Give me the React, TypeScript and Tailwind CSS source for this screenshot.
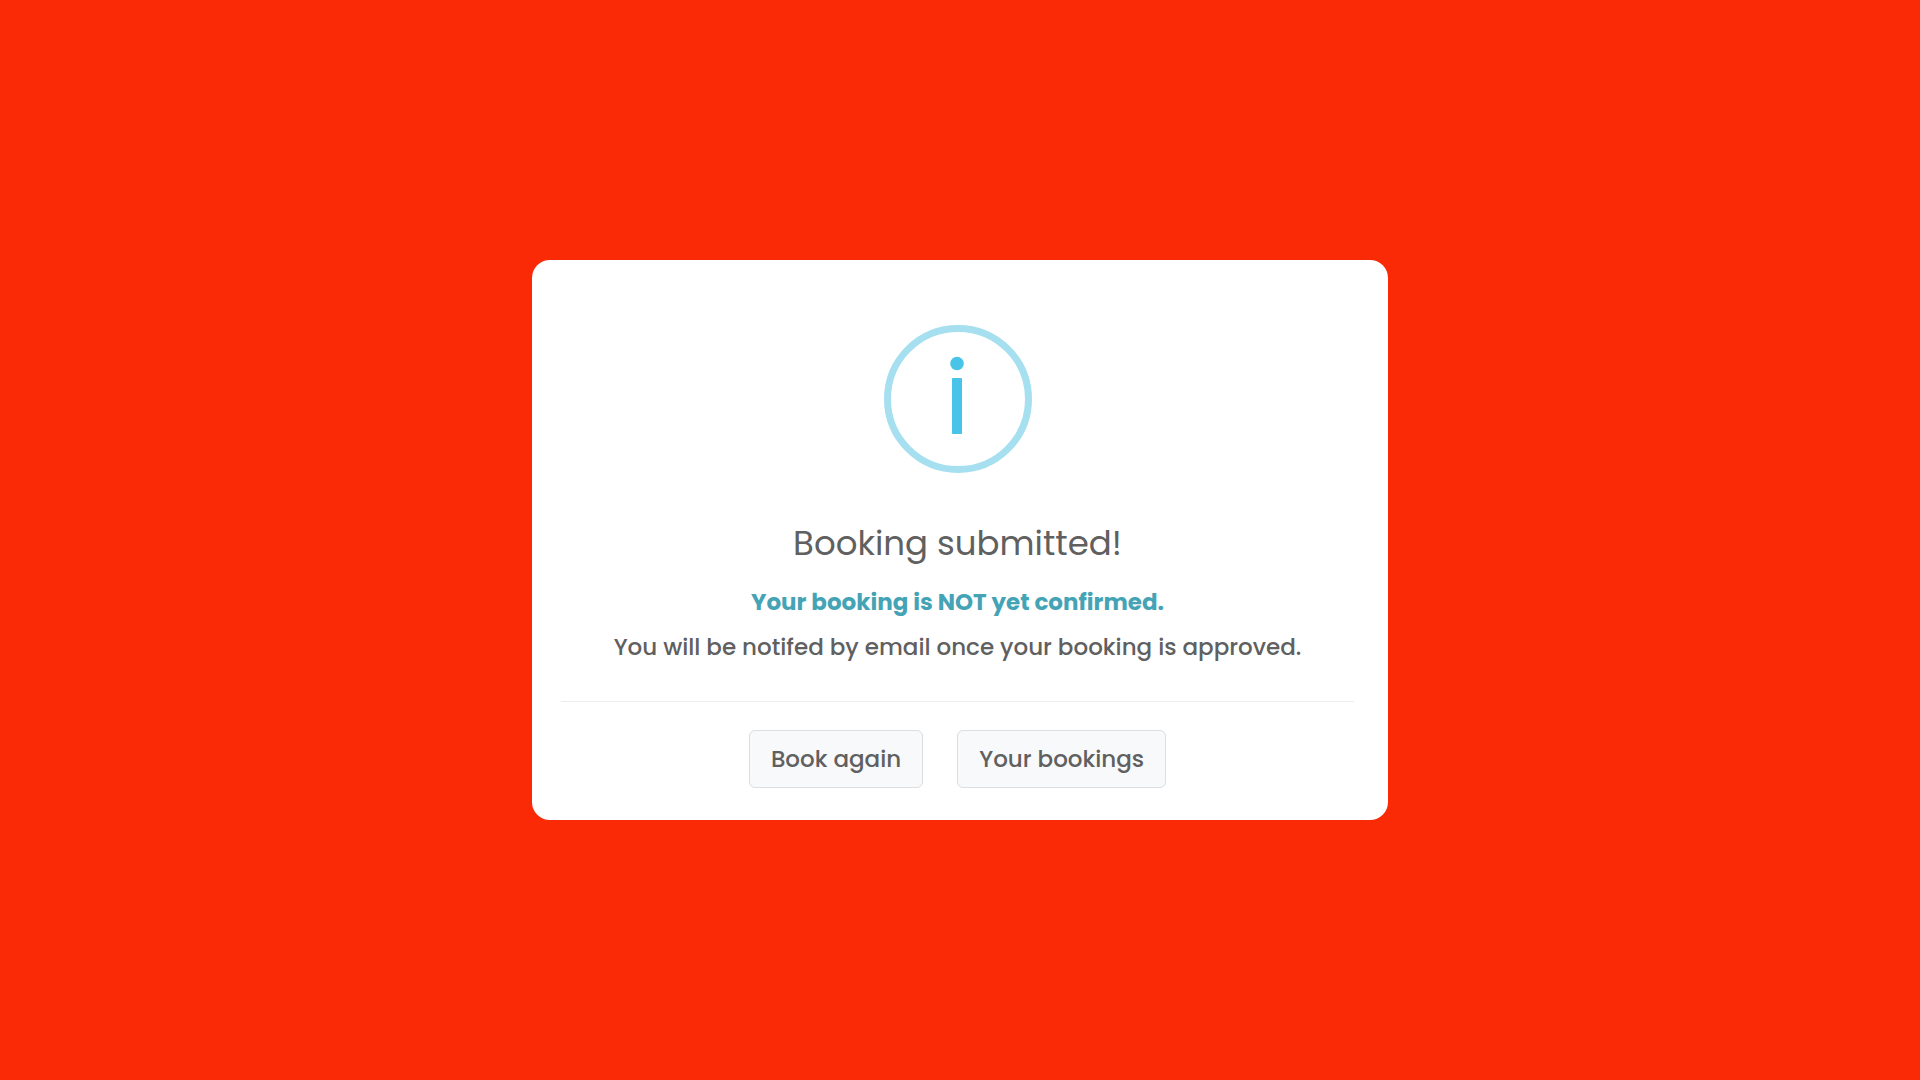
import type { ReactNode } from 'react';

interface ActionButtonProps {
  children: ReactNode;
}

function InfoIcon() {
  return (
    <svg width="148" height="148" viewBox="0 0 148 148" fill="none" aria-hidden="true">
      <circle cx="74" cy="74" r="70.5" stroke="#a5dff0" strokeWidth="7" />
      <circle cx="73" cy="38.5" r="6.8" fill="#48c4e8" />
      <rect x="68" y="53" width="10" height="56" rx="1" fill="#48c4e8" />
    </svg>
  );
}

function ActionButton({ children }: ActionButtonProps) {
  return (
    <button
      type="button"
      className="h-[58px] px-[21px] rounded-md border border-[#dcdedf] bg-[#f8f9fb] text-[23px] font-medium text-[#606060] hover:bg-[#eceef0] transition-colors"
    >
      {children}
    </button>
  );
}

export default function App() {
  return (
    <main className="min-h-screen flex items-center justify-center bg-[#fa2a06] font-['Poppins','Inter',sans-serif]">
      <section className="w-full max-w-[856px] rounded-[18px] bg-white pt-[65px] pb-8 pl-[29px] pr-[34px] text-center text-[#606060]">
        <div className="flex justify-center">
          <InfoIcon />
        </div>

        <h1 className="mt-[46px] text-[34px] leading-[48px]">Booking submitted!</h1>

        <div className="mt-[13px] text-[23px] leading-[45px]">
          <p className="font-bold text-[#45a3b6]">Your booking is NOT yet confirmed.</p>
          <p className="font-medium">You will be notifed by email once your booking is approved.</p>
        </div>

        <hr className="mt-[31px] border-[#ececec]" />

        {/* Actions */}
        <div className="mt-7 flex flex-wrap justify-center gap-[34px]">
          <ActionButton>Book again</ActionButton>
          <ActionButton>Your bookings</ActionButton>
        </div>
      </section>
    </main>
  );
}
